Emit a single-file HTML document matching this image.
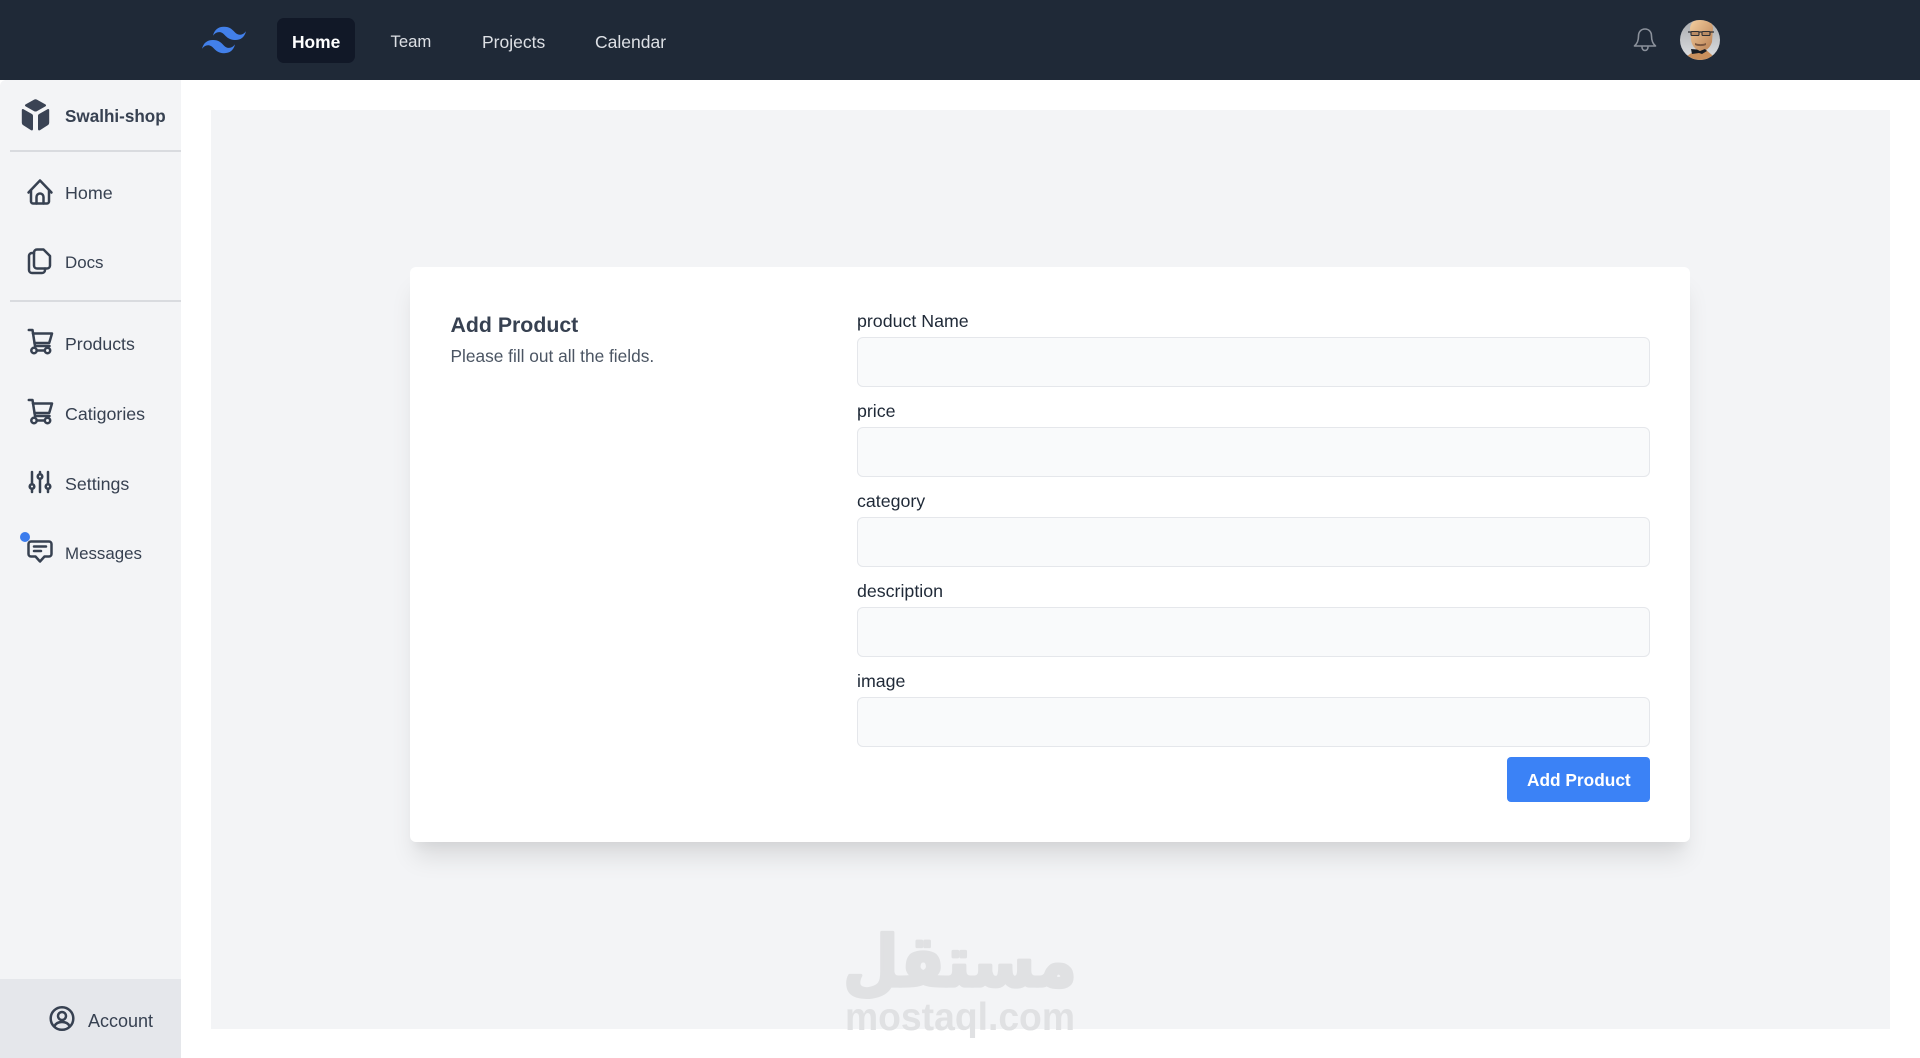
<!DOCTYPE html>
<html lang="en">
<head>
<meta charset="utf-8">
<title>Add Product</title>
<style>
html,body{margin:0;padding:0;width:1920px;height:1058px;overflow:hidden;background:#fff;font-family:"Liberation Sans",sans-serif}
.a{position:absolute}
.t{position:absolute;white-space:nowrap;line-height:24px;height:24px}
.side{color:#374151}
.lbl{color:#1f2937;font-size:17.8px;left:857px}
.inp{position:absolute;left:857px;width:791px;height:48px;background:#f9fafb;border:1px solid #e5e7eb;border-radius:6px}
svg{position:absolute;display:block;overflow:visible}
.ic{fill:none;stroke:#374151;stroke-width:2.5;stroke-linecap:round;stroke-linejoin:round}
</style>
</head>
<body>
<!-- top nav -->
<div class="a" style="left:0;top:0;width:1920px;height:80px;background:#1f2937"></div>
<svg style="left:202px;top:26px" width="44" height="28" viewBox="0 0 54 32.4"><path fill="#4280ea" d="M27 0c-7.2 0-11.7 3.6-13.5 10.8 2.7-3.6 5.85-4.95 9.45-4.05 2.054.513 3.522 2.004 5.147 3.653C30.744 13.09 33.808 16.2 40.5 16.2c7.2 0 11.7-3.6 13.5-10.8-2.7 3.6-5.85 4.95-9.45 4.05-2.054-.513-3.522-2.004-5.147-3.653C36.756 3.11 33.692 0 27 0zM13.5 16.2C6.3 16.2 1.8 19.8 0 27c2.7-3.6 5.85-4.95 9.45-4.05 2.054.514 3.522 2.004 5.147 3.653C17.244 29.29 20.308 32.4 27 32.4c7.2 0 11.7-3.6 13.5-10.8-2.7 3.6-5.85 4.95-9.45 4.05-2.054-.513-3.522-2.004-5.147-3.653C23.256 19.31 20.192 16.2 13.5 16.2z"/></svg>
<div class="a" style="left:277px;top:18px;width:78px;height:45px;background:#111827;border-radius:7px"></div>
<div class="t" style="left:292px;top:30px;color:#fff;font-weight:700;font-size:17.4px">Home</div>
<div class="t" style="left:390.500px;top:30px;color:#dde0e5;font-size:16.7px">Team</div>
<div class="t" style="left:482px;top:30px;color:#dde0e5;font-size:17.5px">Projects</div>
<div class="t" style="left:595px;top:30px;color:#dde0e5;font-size:17.5px">Calendar</div>
<svg style="left:1633px;top:27px" width="24" height="26" viewBox="0 0 24 26" fill="none" stroke="#8b919b" stroke-width="1.6" stroke-linecap="round" stroke-linejoin="round"><path d="M12 2c-4 0-6.5 3-6.5 7 0 5-1.3 7.500-4 10h21c-2.700-2.500-4-5-4-10 0-4-2.500-7-6.500-7z"/><path d="M9 20c0 2 1.200 3.500 3 3.500s3-1.500 3-3.500"/></svg>
<svg style="left:1680px;top:20px" width="40" height="40" viewBox="0 0 40 40">
<defs><clipPath id="av"><circle cx="20" cy="20" r="20"/></clipPath><linearGradient id="avbg" x1="0" y1="0" x2="0" y2="1"><stop offset="0" stop-color="#a9abae"/><stop offset="1" stop-color="#dfe1e4"/></linearGradient><linearGradient id="head" x1="0" y1="0" x2="1" y2="1"><stop offset="0" stop-color="#f4cfa0"/><stop offset="1" stop-color="#b97f52"/></linearGradient></defs>
<g clip-path="url(#av)">
<rect width="40" height="40" fill="url(#avbg)"/>
<path d="M10 8C11 1 16-1 22-1s10 2 11 9l-1 14c-2 6-6 9-10 9-6 0-10-5-11-11z" fill="url(#head)"/>
<path d="M8 12h26" stroke="#2f2f33" stroke-width="1.2" fill="none"/>
<rect x="11" y="11.500" width="8" height="4" rx="1" fill="#b98b63" stroke="#2f2f33" stroke-width="1.100"/>
<rect x="22" y="11.500" width="8" height="4" rx="1" fill="#b98b63" stroke="#2f2f33" stroke-width="1.100"/>
<path d="M15 23c3 1.500 8 1.500 11 0v2c-3 1.500-8 1.500-11 0z" fill="#7d5840"/>
<path d="M7 36l9-6 4 2 5-3 7 6v5H7z" fill="#c98f5c"/>
<path d="M11 29l6 .5 3 1.500 5-2 2 2-5 3-3-1-7 1z" fill="#181c24"/>
</g></svg>

<!-- sidebar -->
<div class="a" style="left:0;top:80px;width:181px;height:978px;background:#f3f4f6;border-top-left-radius:6px"></div>
<div class="a" style="left:10px;top:150px;width:171px;height:2px;background:#d9dbdf"></div>
<div class="a" style="left:10px;top:300px;width:171px;height:2px;background:#d9dbdf"></div>
<div class="a" style="left:0;top:979px;width:181px;height:79px;background:#e5e7eb"></div>

<svg style="left:21px;top:99px" width="29" height="32" viewBox="0 0 29 32" fill="#3a4354"><path d="M12.900.7a3 3 0 0 1 3.200 0l8.300 4.700c.9.500.9 1.500 0 2l-8.400 4.700a3 3 0 0 1-3 0L4.600 7.400c-.9-.5-.9-1.500 0-2z"/><path d="M.8 11.100c0-1 .9-1.400 1.700-.9l8.200 4.700c.9.500 1.300 1.100 1.300 2v13.200c0 1.100-1 1.600-1.900 1.100L2.500 26.400A3.400 3.400 0 0 1 .8 23.500z"/><path d="M28.200 11.100c0-1-.9-1.400-1.700-.9l-8.200 4.700c-.9.500-1.300 1.100-1.300 2v13.200c0 1.100 1 1.600 1.900 1.100l7.600-4.800a3.400 3.400 0 0 0 1.700-2.900z"/></svg>
<div class="t side" style="left:65px;top:105px;font-weight:700;font-size:17.1px">Swalhi-shop</div>

<svg class="ic" style="left:27px;top:179px" width="26" height="26" viewBox="0 0 26 26"><path d="M1.500 13.500 13 1.500l11.500 12"/><path d="M4 11v11.500a2 2 0 0 0 2 2h14a2 2 0 0 0 2-2V11"/><path d="M9.500 24.500V18a3.500 3.500 0 0 1 7 0v6.500"/></svg>
<div class="t side" style="left:65px;top:181px;font-size:17.9px">Home</div>

<svg class="ic" style="left:28px;top:248px" width="24" height="26" viewBox="0 0 24 26"><path d="M6 6V4.500a3 3 0 0 1 3-3h6.500l6.500 6.500v9.500a3 3 0 0 1-3 3H9a3 3 0 0 1-3-3z"/><path d="M6 5H4a3 3 0 0 0-3 3v14a3 3 0 0 0 3 3h10a3 3 0 0 0 3-3v-1.500"/></svg>
<div class="t side" style="left:65px;top:251px;font-size:16.9px">Docs</div>

<svg class="ic" style="left:28px;top:329px" width="25" height="25" viewBox="0 0 25 25"><path d="M.8 1h3.700l2.500 16h14.500"/><path d="M5 4.500h19l-2.800 9.500H6.500"/><circle cx="6" cy="21.500" r="2.700"/><circle cx="19.500" cy="21.500" r="2.700"/><path d="M8.700 21.500h8"/></svg>
<div class="t side" style="left:65px;top:332px;font-size:17.7px">Products</div>

<svg class="ic" style="left:28px;top:399px" width="25" height="25" viewBox="0 0 25 25"><path d="M.8 1h3.700l2.500 16h14.500"/><path d="M5 4.500h19l-2.800 9.500H6.500"/><circle cx="6" cy="21.500" r="2.700"/><circle cx="19.500" cy="21.500" r="2.700"/><path d="M8.700 21.500h8"/></svg>
<div class="t side" style="left:65px;top:402px;font-size:17.8px">Catigories</div>

<svg class="ic" style="left:29px;top:471px" width="22" height="22" viewBox="0 0 22 22" stroke-width="2.400"><path d="M3 1v12M3 18v3M11 1v2M11 8v13M19 1v12M19 18v3"/><circle cx="3" cy="15.500" r="2.300"/><circle cx="11" cy="5.500" r="2.300"/><circle cx="19" cy="15.500" r="2.300"/></svg>
<div class="t side" style="left:65px;top:472px;font-size:17.8px">Settings</div>

<svg class="ic" style="left:27px;top:540px" width="26" height="23" viewBox="0 0 26 23"><path d="M4 1.500h18a2.500 2.500 0 0 1 2.500 2.500v10a2.500 2.500 0 0 1-2.500 2.500h-4.500L13 21.500l-4.500-5H4A2.500 2.500 0 0 1 1.500 14V4A2.500 2.500 0 0 1 4 1.500z"/><path d="M7 6.500h12M7 11h7"/></svg>
<div class="a" style="left:20px;top:532px;width:10px;height:10px;border-radius:50%;background:#3b7ced"></div>
<div class="t side" style="left:65px;top:542px;font-size:16.9px">Messages</div>

<svg class="ic" style="left:49px;top:1006px" width="26" height="25" viewBox="0 0 26 25"><circle cx="13" cy="12.500" r="11.300"/><circle cx="13" cy="10" r="4"/><path d="M5.500 20c1.500-3 4-4 7.500-4s6 1 7.500 4"/></svg>
<div class="t side" style="left:88px;top:1009px;font-size:18px">Account</div>

<!-- main panel -->
<div class="a" style="left:211px;top:110px;width:1679px;height:919px;background:#f3f4f6"></div>
<!-- card -->
<div class="a" style="left:410px;top:267px;width:1280px;height:575px;background:#fff;border-radius:6px;box-shadow:0 20px 25px -5px rgba(0,0,0,.1),0 10px 10px -5px rgba(0,0,0,.04)"></div>
<div class="t" style="left:450.500px;top:313px;color:#374151;font-weight:700;font-size:21.3px">Add Product</div>
<div class="t" style="left:450.500px;top:344px;color:#4b5563;font-size:17.3px">Please fill out all the fields.</div>

<div class="t lbl" style="top:309px">product Name</div>
<div class="inp" style="top:337px"></div>
<div class="t lbl" style="top:399px">price</div>
<div class="inp" style="top:427px"></div>
<div class="t lbl" style="top:489px">category</div>
<div class="inp" style="top:517px"></div>
<div class="t lbl" style="top:579px">description</div>
<div class="inp" style="top:607px"></div>
<div class="t lbl" style="top:669px">image</div>
<div class="inp" style="top:697px"></div>

<div class="a" style="left:1507px;top:757px;width:143px;height:45px;background:#3b82f6;border-radius:4px"></div>
<div class="t" style="left:1527px;top:768px;color:#fff;font-weight:700;font-size:17.3px">Add Product</div>

<!-- watermark -->
<svg style="left:0;top:0" width="1920" height="1058" viewBox="0 0 1920 1058">
<g transform="translate(960 986) scale(.76 .84)"><text x="0" y="0" text-anchor="middle" font-family="DejaVu Sans" font-weight="700" font-size="84" fill="#e0e1e3" stroke="#e0e1e3" stroke-width="4" stroke-linejoin="round" direction="rtl">مستقل</text></g>
<text x="845" y="1030" font-family="Liberation Sans" font-weight="700" font-size="39" fill="#e0e1e3" textLength="230" lengthAdjust="spacingAndGlyphs">mostaql.com</text>
</svg>
</body>
</html>
